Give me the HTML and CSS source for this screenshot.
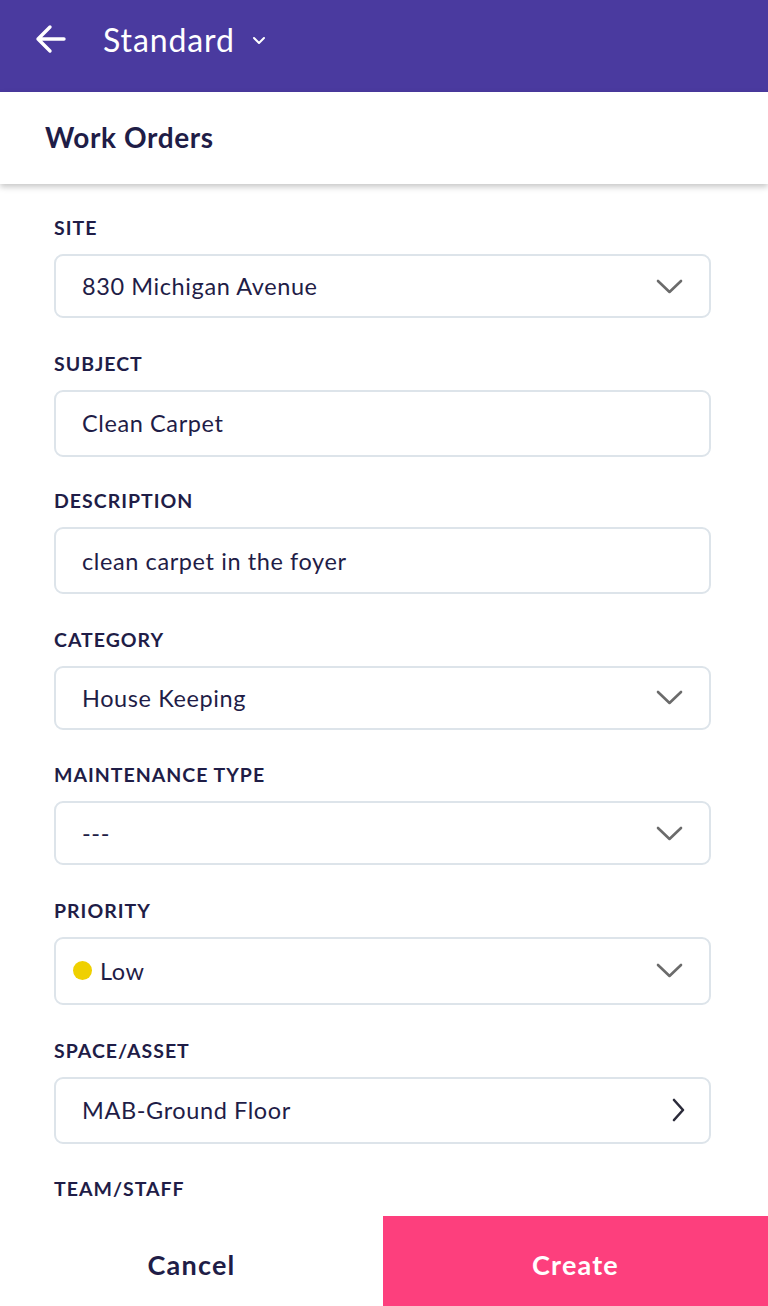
FILE: index.html
```html
<!DOCTYPE html>
<html>
<head>
<meta charset="utf-8">
<link rel="stylesheet" href="styles.css">
</head>
<body>
<div class="app">
  <header class="topbar">
    <svg class="back" width="32" height="30" viewBox="0 0 32 30"><path d="M30 15H4M16 3L4 15l12 12" fill="none" stroke="#fff" stroke-width="3.4" stroke-linecap="round" stroke-linejoin="round"/></svg>
    <span class="view">Standard</span>
    <svg class="caret" width="14" height="9" viewBox="0 0 14 9"><path d="M2 2l5 5 5-5" fill="none" stroke="#fff" stroke-width="2" stroke-linecap="round" stroke-linejoin="round"/></svg>
  </header>
  <div class="titlebar">Work Orders</div>
  <main class="form">
    <div class="field">
      <div class="label">SITE</div>
      <div class="box"><span class="val">830 Michigan Avenue</span><svg class="chev" width="27" height="15" viewBox="0 0 27 15"><path d="M2 2l11.5 11L25 2" fill="none" stroke="#6b6b6b" stroke-width="2.6" stroke-linecap="round" stroke-linejoin="round"/></svg></div>
    </div>
    <div class="field">
      <div class="label">SUBJECT</div>
      <div class="box box-input"><span class="val">Clean Carpet</span></div>
    </div>
    <div class="field">
      <div class="label">DESCRIPTION</div>
      <div class="box box-input box-desc"><span class="val">clean carpet in the foyer</span></div>
    </div>
    <div class="field">
      <div class="label">CATEGORY</div>
      <div class="box"><span class="val">House Keeping</span><svg class="chev" width="27" height="15" viewBox="0 0 27 15"><path d="M2 2l11.5 11L25 2" fill="none" stroke="#6b6b6b" stroke-width="2.6" stroke-linecap="round" stroke-linejoin="round"/></svg></div>
    </div>
    <div class="field">
      <div class="label">MAINTENANCE TYPE</div>
      <div class="box"><span class="val">---</span><svg class="chev" width="27" height="15" viewBox="0 0 27 15"><path d="M2 2l11.5 11L25 2" fill="none" stroke="#6b6b6b" stroke-width="2.6" stroke-linecap="round" stroke-linejoin="round"/></svg></div>
    </div>
    <div class="field">
      <div class="label">PRIORITY</div>
      <div class="box box-priority"><span class="dot"></span><span class="val">Low</span><svg class="chev" width="27" height="15" viewBox="0 0 27 15"><path d="M2 2l11.5 11L25 2" fill="none" stroke="#6b6b6b" stroke-width="2.6" stroke-linecap="round" stroke-linejoin="round"/></svg></div>
    </div>
    <div class="field">
      <div class="label">SPACE/ASSET</div>
      <div class="box box-link"><span class="val">MAB-Ground Floor</span><svg class="chev-r" width="14" height="24" viewBox="0 0 14 24"><path d="M3 2l9 10-9 10" fill="none" stroke="#2b2b3a" stroke-width="2.6" stroke-linecap="round" stroke-linejoin="round"/></svg></div>
    </div>
    <div class="field">
      <div class="label">TEAM/STAFF</div>
    </div>
  </main>
  <footer class="actions">
    <div class="btn cancel">Cancel</div>
    <div class="btn create">Create</div>
  </footer>
</div>
</body>
</html>
```
FILE: styles.css
```css
* { box-sizing: border-box; }
html, body { margin: 0; padding: 0; }
body {
  width: 768px;
  height: 1306px;
  overflow: hidden;
  font-family: Lato, "Open Sans", sans-serif;
  color: #1f1d47;
  background: #fff;
}
.app {
  display: flex;
  flex-direction: column;
  height: 1306px;
}
.topbar {
  height: 92px;
  flex: none;
  background: #4a3a9f;
  display: flex;
  align-items: center;
  padding-left: 34px;
  padding-bottom: 14px;
  color: #fff;
}
.back { margin-right: 37px; }
.view {
  font-size: 32px;
  font-weight: 400;
  letter-spacing: 0.9px;
  margin-right: 17px;
}
.caret { margin-top: 2px; }
.titlebar {
  height: 92px;
  flex: none;
  display: flex;
  align-items: center;
  padding-left: 45px;
  padding-bottom: 2px;
  font-size: 28px;
  font-weight: 700;
  letter-spacing: 0.6px;
  color: #1f1d47;
  background: #fff;
  box-shadow: 0 3px 6px rgba(0,0,0,0.22);
  position: relative;
  z-index: 1;
}
.form {
  flex: 1;
  overflow: hidden;
  padding: 33px 57px 0 54px;
}
.field { margin-bottom: 34.6px; }
.label {
  height: 22px;
  line-height: 22px;
  font-size: 19.5px;
  font-weight: 700;
  letter-spacing: 1px;
  color: #1f1d47;
  margin-bottom: 15px;
}
.box {
  height: 64px;
  border: 2px solid #dde4ea;
  border-radius: 9px;
  display: flex;
  align-items: center;
  padding: 0 26px 0 26px;
}
.box-input { height: 67px; margin-top: 1px; margin-bottom: -1px; }
.box-desc { margin-top: 0; margin-bottom: 0; }
.box-priority { height: 68px; padding-left: 17px; }
.box-link { height: 67px; }
.val {
  flex: 1;
  font-size: 23.5px;
  letter-spacing: 0.6px;
  color: #1f1d47;
}
.dot {
  width: 19px;
  height: 19px;
  border-radius: 50%;
  background: #efd000;
  margin-right: 8px;
  flex: none;
}
.chev { flex: none; }
.chev-r { flex: none; margin-right: -2px; }
.actions {
  height: 90px;
  flex: none;
  display: flex;
}
.btn {
  display: flex;
  align-items: center;
  justify-content: center;
  padding-top: 6px;
  font-size: 27px;
  font-weight: 700;
  letter-spacing: 1.2px;
}
.cancel {
  width: 383px;
  background: #fff;
  color: #1f1d47;
}
.create {
  flex: 1;
  background: #fd3f7d;
  color: #fff;
}
```
